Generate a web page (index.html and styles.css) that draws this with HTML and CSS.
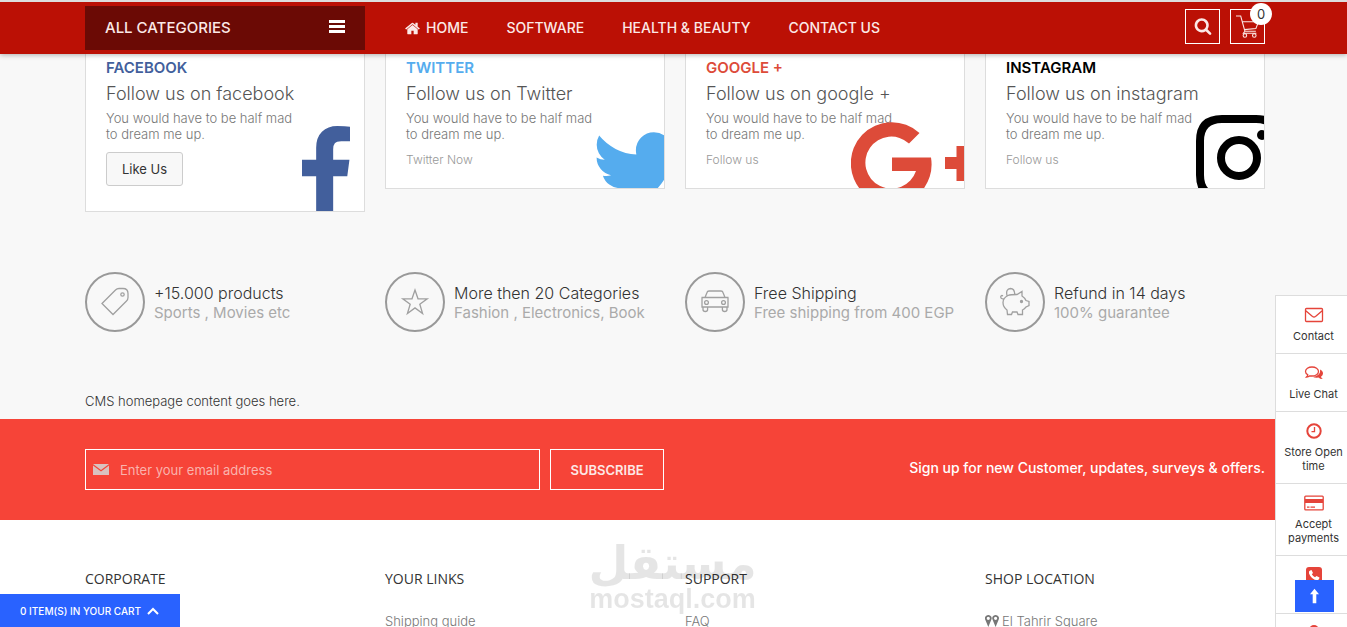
FILE: index.html
```
<!DOCTYPE html>
<html lang="en">
<head>
    <meta charset="UTF-8">
    <meta name="viewport" content="width=device-width, initial-scale=1.0">
    <title>Home page</title>
    <link rel="stylesheet" href="styles.css">
</head>
<body>
    <header class="header">
        <div class="container header-row">
            <button class="categories" type="button">
                <span>ALL CATEGORIES</span>
                <svg class="burger" viewBox="0 0 16 14" aria-hidden="true"><path d="M0 0h16v3H0zM0 5h16v3H0zM0 10h16v3H0z"/></svg>
            </button>
            <nav class="nav">
                <a href="#">
                    <svg class="icon-home" viewBox="64 200 1664 1400" aria-hidden="true"><path d="M1472 992v480q0 26-19 45t-45 19h-384v-384h-256v384h-384q-26 0-45-19t-19-45v-480q0-1 .5-3t.5-3l575-474 575 474q1 2 1 6zm223-69l-62 74q-8 9-21 11h-3q-13 0-21-7l-692-577-692 577q-12 8-24 7-13-2-21-11l-62-74q-8-10-7-23.500t11-21.500l719-599q32-26 76-26t76 26l244 204v-195q0-14 9-23t23-9h192q14 0 23 9t9 23v408l219 182q10 8 11 21.500t-7 23.500z"/></svg>
                    HOME
                </a>
                <a href="#">SOFTWARE</a>
                <a href="#">HEALTH &amp; BEAUTY</a>
                <a href="#">CONTACT US</a>
            </nav>
            <div class="tools">
                <button class="tool" type="button" aria-label="Search">
                    <svg class="icon-search" viewBox="0 0 1792 1792" aria-hidden="true"><path d="M1216 832q0-185-131.500-316.500t-316.500-131.500-316.500 131.500-131.500 316.500 131.500 316.500 316.500 131.500 316.500-131.500 131.500-316.500zm512 832q0 52-38 90t-90 38q-54 0-90-38l-343-342q-179 124-399 124-143 0-273.500-55.500t-225-150-150-225-55.500-273.500 55.500-273.500 150-225 225-150 273.500-55.500 273.500 55.500 225 150 150 225 55.500 273.500q0 220-124 399l343 343q37 37 37 90z"/></svg>
                </button>
                <button class="tool" type="button" aria-label="Cart">
                    <svg class="icon-cart" viewBox="0 0 22 22" aria-hidden="true"><path d="M0 1h4.500l4 14.500h10.500M5.500 6.500h16l-2.500 6.500-11 1M8.500 15.500l-1.500 2h12.500"/><circle cx="8.500" cy="19.500" r="1.700"/><circle cx="17.500" cy="19.500" r="1.700"/></svg>
                    <span class="badge">0</span>
                </button>
            </div>
        </div>
    </header>

    <main>
        <div class="container grid social">
            <section class="card">
                <h2 class="facebook">FACEBOOK</h2>
                <h3>Follow us on facebook</h3>
                <p>You would have to be half mad to dream me up.</p>
                <button class="like" type="button">Like Us</button>
                <svg class="logo logo-facebook" viewBox="479 0 864 1530" aria-hidden="true"><path d="M1343 12v264h-157q-86 0-116 36t-30 108v189h293l-39 296h-254v759h-306v-759h-255v-296h255v-218q0-186 104-288.500t277-102.500q147 0 228 12z"/></svg>
            </section>
            <section class="card">
                <h2 class="twitter">TWITTER</h2>
                <h3>Follow us on Twitter</h3>
                <p>You would have to be half mad to dream me up.</p>
                <a href="#">Twitter Now</a>
                <svg class="logo logo-twitter" viewBox="0 0 1792 1792" aria-hidden="true"><path d="M1684 408q-67 98-162 167 1 14 1 42 0 130-38 259.500t-115.500 248.500-184.500 210.500-258 146-323 54.500q-271 0-496-145 35 4 78 4 225 0 401-138-105-2-188-64.500t-114-159.500q33 5 61 5 43 0 85-11-112-23-185.500-111.500t-73.500-205.500v-4q68 38 146 41-66-44-105-115t-39-154q0-88 44-163 121 149 294.500 238.500t371.500 99.500q-8-38-8-74 0-134 94.500-228.500t228.500-94.500q140 0 236 102 109-21 205-78-37 115-142 178 93-10 186-50z"/></svg>
            </section>
            <section class="card">
                <h2 class="google">GOOGLE +</h2>
                <h3>Follow us on google +</h3>
                <p>You would have to be half mad to dream me up.</p>
                <a href="#">Follow us</a>
                <svg class="logo logo-google" viewBox="0 0 113 66" aria-hidden="true"><path d="M68.500 11A41 41 0 1 0 69 71A41 41 0 0 0 80 35.500H41V49H65A26 26 0 1 1 58 21.500ZM94 35h11.500V24H117V59H105.500V47H94Z"/></svg>
            </section>
            <section class="card">
                <h2 class="instagram">INSTAGRAM</h2>
                <h3>Follow us on instagram</h3>
                <p>You would have to be half mad to dream me up.</p>
                <a href="#">Follow us</a>
                <svg class="logo logo-instagram" viewBox="0 0 68 73" aria-hidden="true"><path d="M26 4H60Q82 4 82 26V60Q82 82 60 82H26Q4 82 4 60V26Q4 4 26 4Z"/><circle cx="43" cy="43" r="18"/><circle class="dot" cx="66" cy="20" r="5"/></svg>
            </section>
        </div>

        <div class="container grid services">
            <div class="service">
                <span class="ring"><svg viewBox="0 0 30 30" aria-hidden="true"><path d="M2 16.500L15.500 3Q17 1.500 19 1.500h4q5 0 5 5v4q0 2-1.500 3.500L13 27.500Z"/><circle cx="22.500" cy="7.500" r="1.700"/></svg></span>
                <p><strong>+15.000 products</strong><span>Sports , Movies etc</span></p>
            </div>
            <div class="service">
                <span class="ring"><svg viewBox="0 0 30 30" aria-hidden="true"><path d="M15 3l3 8.800h9.200l-7.400 5.500 2.800 9.200-7.600-5.600-7.600 5.600 2.800-9.200L2.800 11.800H12Z"/></svg></span>
                <p><strong>More then 20 Categories</strong><span>Fashion , Electronics, Book</span></p>
            </div>
            <div class="service">
                <span class="ring"><svg viewBox="0 0 30 30" aria-hidden="true"><path d="M5 10.500l2-5q.4-1.500 2-1.500h12q1.600 0 2 1.500l2 5M1.500 10.500h27M2 10.500v9.500h26v-9.500M3 20v2.500q0 2 2.300 2t2.300-2V20M22.400 20v2.500q0 2 2.300 2t2.300-2V20"/><circle cx="6.500" cy="15.500" r="1.900"/><circle cx="23.500" cy="15.500" r="1.900"/></svg></span>
                <p><strong>Free Shipping</strong><span>Free shipping from 400 EGP</span></p>
            </div>
            <div class="service">
                <span class="ring"><svg viewBox="0 0 30 30" aria-hidden="true"><path d="M8 8.500Q10.500 7.500 17 7.500L22 4.500V9Q25 11 26 13.500L29 14.500V18.500L26 20Q24.500 22 22.500 23V27.500H18L17 25H12.500L11.500 27.500H7.500L7 23Q3 20 3 15.500Q3 11 8 8.500ZM3.500 12Q.5 12 .8 9.500Q1.300 8 3 8.800M7 8.500Q5.500 2 10.500 1.500Q14.500 1.500 14.800 7.300"/><circle class="eye" cx="21.500" cy="14.500" r="1"/></svg></span>
                <p><strong>Refund in 14 days</strong><span>100% guarantee</span></p>
            </div>
        </div>

        <p class="container cms">CMS homepage content goes here.</p>

        <section class="newsletter">
            <div class="container newsletter-row">
                <form class="subscribe">
                    <label class="field" for="email">
                        <svg class="icon-mail" viewBox="0 0 16 11" aria-label="Email"><path d="M0 0h16L8 6ZM0 1.500l8 6 8-6V11H0Z"/></svg>
                        <input type="email" id="email" name="email" placeholder="Enter your email address">
                    </label>
                    <button type="submit">SUBSCRIBE</button>
                </form>
                <p>Sign up for new Customer, updates, surveys &amp; offers.</p>
            </div>
        </section>
    </main>

    <footer class="container grid footer">
        <div>
            <h4>CORPORATE</h4>
        </div>
        <div>
            <h4>YOUR LINKS</h4>
            <a href="#">Shipping guide</a>
        </div>
        <div>
            <h4>SUPPORT</h4>
            <a href="#">FAQ</a>
        </div>
        <div>
            <h4>SHOP LOCATION</h4>
            <p class="address">
                <svg viewBox="0 0 14 12" aria-hidden="true"><path fill-rule="evenodd" d="M3.300 0a3.300 3.300 0 0 1 3 4.800L3.300 12 .3 4.800A3.300 3.300 0 0 1 3.300 0Zm0 1.700a1.600 1.600 0 1 0 0 3.200 1.600 1.600 0 0 0 0-3.200ZM10.600 0a3.300 3.300 0 0 1 3 4.800L10.600 12l-3-7.200A3.300 3.300 0 0 1 10.600 0Zm0 1.700a1.600 1.600 0 1 0 0 3.200 1.600 1.600 0 0 0 0-3.200Z"/></svg>
                El Tahrir Square
            </p>
        </div>
    </footer>

    <div class="watermark">
        <span class="watermark-ar" lang="ar" dir="rtl">مستقل</span>
        <span class="watermark-en">mostaql.com</span>
    </div>

    <aside class="side">
        <a href="#">
            <svg viewBox="0 0 20 16" aria-hidden="true"><path class="line" d="M2.500 1.500h15q1 0 1 1v11q0 1-1 1h-15q-1 0-1-1v-11q0-1 1-1ZM1.500 3.500l7 6q1.500 1 3 0l7-6"/></svg>
            Contact
        </a>
        <a href="#">
            <svg viewBox="0 0 20 16" aria-hidden="true"><path class="line" d="M8 2c3.600 0 6.500 2 6.500 4.500S11.600 11 8 11q-1 0-2-.2Q4.500 12 2.500 12q1-1 1.300-2.200Q1.500 8.500 1.500 6.500C1.500 4 4.400 2 8 2Z"/><path d="M16 4.500c2 1 3 2.300 3 4q0 2-2 3.200.3 1.300 1.800 2.300-2.500.2-4.300-1.500-3.500.5-6-.8c4.500 0 8.500-2.700 7.500-7.200Z"/></svg>
            Live Chat
        </a>
        <a href="#">
            <svg viewBox="0 0 20 16" aria-hidden="true"><circle class="line bold" cx="10" cy="8" r="6.700"/><path class="line" d="M10.500 4v4.700H7.500"/></svg>
            Store Open time
        </a>
        <a href="#">
            <svg viewBox="0 0 20 16" aria-hidden="true"><path class="line" d="M1.700 1.200h16.600q.9 0 .9.900v11.800q0 .9-.9.900H1.700q-.9 0-.9-.9V2.100q0-.9.900-.9Z"/><path d="M1 4h18v4H1zM3 11.500h2.500v1.300H3zM6.500 11.500H11v1.300H6.500z"/></svg>
            Accept payments
        </a>
        <a href="#" aria-label="Phone">
            <svg viewBox="0 0 20 16" aria-hidden="true"><rect x="2" y="0" width="16" height="16" rx="3"/><path class="phone" d="M5 4.500Q6 3 7.500 3L9 6 7.800 7.300Q9 9.500 11 10.300L12.500 9l3 1.500q0 2-2 2.700Q7.500 13 5 6.500Z"/></svg>
        </a>
        <a href="#" aria-label="Location">
            <svg viewBox="0 0 20 16" aria-hidden="true"><circle cx="10" cy="5" r="5"/><path d="M5.500 7L10 16l4.500-9Z"/></svg>
        </a>
    </aside>

    <button class="to-top" type="button" aria-label="Back to top">
        <svg viewBox="0 0 10 16" aria-hidden="true"><path d="M5 0l5 6H7v10H3V6H0Z"/></svg>
    </button>

    <button class="cart-bar" type="button">
        0 ITEM(S) IN YOUR CART
        <svg viewBox="0 0 12 8" aria-hidden="true"><path d="M1 7l5-5 5 5"/></svg>
    </button>
</body>
</html>
```
FILE: styles.css
```
* {
    box-sizing: border-box;
}

body {
    margin: 0;
    height: 100vh;
    overflow: hidden;
    font-family: Inter, "Liberation Sans", sans-serif;
    font-size: 13px;
    font-weight: 300;
    line-height: 20px;
    color: #333;
    background-color: #fff;
}

h2, h3, h4, p {
    margin: 0;
}

a {
    color: inherit;
    text-decoration: none;
}

button {
    padding: 0;
    font-family: inherit;
    cursor: pointer;
}

svg {
    display: block;
    fill: currentColor;
    flex: none;
}

.container {
    padding: 0 82px 0 85px;
}

.grid {
    display: grid;
    grid-template-columns: repeat(4, 1fr);
    gap: 20px;
    align-items: start;
}

/* header */
.header {
    position: relative;
    z-index: 10;
    border-top: 2px solid #ddd;
    background-color: #bb1005;
    box-shadow: 0 1px 5px rgba(0, 0, 0, 0.3);
}

.header-row {
    display: flex;
    align-items: center;
    height: 52px;
    color: #fff;
}

.categories {
    display: flex;
    align-items: center;
    justify-content: space-between;
    width: 280px;
    height: 44px;
    padding: 0 20px 2px;
    border: none;
    background-color: #6b0a05;
    color: #fbe9e7;
    font-size: 15px;
    font-weight: 500;
}

.burger {
    width: 16px;
    height: 14px;
    color: #fff;
}

.nav {
    display: flex;
    gap: 38px;
    margin-left: 40px;
    font-size: 14px;
    font-weight: 500;
    color: #fbe9e7;
}

.nav a {
    display: flex;
    align-items: center;
    gap: 6px;
}

.icon-home {
    width: 15px;
    height: 13px;
}

.tools {
    display: flex;
    gap: 10px;
    margin-left: auto;
    padding-bottom: 4px;
}

.tool {
    position: relative;
    display: flex;
    align-items: center;
    justify-content: center;
    width: 35px;
    height: 35px;
    border: 1px solid #fff;
    background: none;
    color: #fbe9e7;
}

.icon-search {
    width: 18px;
    height: 18px;
}

.icon-cart {
    width: 23px;
    height: 23px;
    fill: none;
    stroke: currentColor;
}

.badge {
    position: absolute;
    top: -7px;
    right: -8px;
    width: 22px;
    height: 22px;
    border-radius: 50%;
    background-color: #fff;
    color: #333;
    font-size: 13px;
    line-height: 23px;
}

/* social cards */
main {
    background-color: #f8f8f8;
}

.card {
    position: relative;
    overflow: hidden;
    padding: 4px 60px 20px 20px;
    border: 1px solid #ddd;
    border-top: none;
    background-color: #fff;
    line-height: 16px;
    color: #777;
}

.card h2 {
    font-size: 15px;
    font-weight: 600;
    line-height: 20px;
}

.card h3 {
    font-size: 18px;
    font-weight: 300;
    line-height: 32px;
    color: #555;
    white-space: nowrap;
}

.card p {
    margin-bottom: 10px;
}

.card a {
    display: block;
    font-size: 12px;
    color: #999;
}

.card .facebook, .logo-facebook {
    color: #425f9c;
}

.card .twitter, .logo-twitter {
    color: #55acee;
}

.card .google, .logo-google {
    color: #dd4b39;
}

.card .instagram, .logo-instagram {
    color: #000;
}

.like {
    display: block;
    width: 77px;
    height: 34px;
    margin-bottom: 5px;
    border: 1px solid #ccc;
    border-radius: 3px;
    background-color: #f8f8f8;
    color: #333;
    font-size: 13px;
}

.logo {
    position: absolute;
    right: 0;
    bottom: 0;
}

.logo-facebook {
    right: 14px;
    width: 48px;
    height: 85px;
}

.logo-twitter {
    right: -23px;
    bottom: -30px;
    width: 100px;
    height: 100px;
}

.logo-google {
    width: 113px;
    height: 66px;
}

.logo-instagram {
    width: 68px;
    height: 73px;
    fill: none;
    stroke: currentColor;
    stroke-width: 8;
}

.dot {
    fill: currentColor;
    stroke: none;
}

/* services */
.services {
    margin-top: 60px;
}

.service {
    display: flex;
    align-items: center;
    gap: 9px;
}

.ring {
    display: flex;
    align-items: center;
    justify-content: center;
    flex: none;
    width: 60px;
    height: 60px;
    border: 2px solid #999;
    border-radius: 50%;
    color: #a0a0a0;
}

.ring svg {
    width: 30px;
    height: 30px;
    fill: none;
    stroke: currentColor;
    stroke-width: 1.3;
}

.ring .eye {
    fill: currentColor;
}

.service p {
    padding-top: 2px;
    white-space: nowrap;
}

.service strong {
    display: block;
    font-size: 16px;
    font-weight: 300;
}

.service p span {
    display: block;
    color: #aaa;
    font-size: 15px;
    font-weight: 400;
}

.cms {
    padding-top: 59px;
    padding-bottom: 8px;
}

/* newsletter */
.newsletter {
    padding: 30px 0;
    background-color: #f64438;
    color: #fff;
}

.newsletter-row {
    display: flex;
    align-items: center;
    justify-content: space-between;
}

.newsletter-row p {
    padding-bottom: 3px;
    font-size: 14px;
    font-weight: 500;
}

.subscribe {
    display: flex;
    gap: 10px;
    width: 579px;
}

.field {
    display: flex;
    align-items: center;
    flex: 1;
    gap: 11px;
    height: 41px;
    padding-left: 7px;
    border: 1px solid #fff;
    color: #d9c2c0;
}

.icon-mail {
    width: 16px;
    height: 11px;
}

.field input {
    flex: 1;
    height: 39px;
    padding: 0;
    border: none;
    outline: none;
    background: none;
    color: #fff;
    font: inherit;
}

.field input::placeholder {
    color: #fab3ad;
    font-weight: 400;
}

.subscribe button {
    width: 114px;
    border: 1px solid #fff;
    background: none;
    color: #fde8e6;
    font-size: 13px;
    font-weight: 600;
}

/* footer */
.footer {
    padding-top: 49px;
    color: #777;
}

.footer h4 {
    margin-bottom: 22px;
    font-family: "Open Sans", sans-serif;
    font-size: 14px;
    font-weight: 400;
    color: #333;
}

.footer a, .address {
    white-space: nowrap;
}

.address {
    display: flex;
    align-items: center;
    gap: 3px;
}

.address svg {
    width: 14px;
    height: 12px;
}

.watermark {
    position: fixed;
    left: 50%;
    bottom: 14px;
    display: flex;
    flex-direction: column;
    align-items: center;
    width: 162px;
    margin-left: -82px;
    color: rgba(0, 0, 0, 0.1);
    font-weight: 700;
    pointer-events: none;
}

.watermark-ar {
    font-family: "DejaVu Sans", sans-serif;
    font-size: 46px;
    line-height: 44px;
}

.watermark-en {
    font-family: "Liberation Sans", sans-serif;
    font-size: 27px;
    line-height: 28px;
}

/* right side links */
.side {
    position: fixed;
    top: 295px;
    right: 0;
    width: 72px;
    height: 400px;
    border-left: 1px solid #ddd;
    background-color: #fff;
    font-size: 11px;
    font-weight: 400;
    line-height: 14px;
    text-align: center;
}

.side a {
    display: block;
    min-height: 58px;
    padding: 11px 0 10px 4px;
    border-top: 1px solid #ddd;
}

.side svg {
    width: 20px;
    height: 16px;
    margin: 0 auto 6px;
    color: #e5443a;
}

.side .line {
    fill: none;
    stroke: currentColor;
    stroke-width: 1.3;
}

.side .bold {
    stroke-width: 2;
}

.side .phone {
    fill: #fff;
}

.to-top {
    position: fixed;
    right: 13px;
    bottom: 15px;
    display: flex;
    align-items: center;
    justify-content: center;
    width: 39px;
    height: 32px;
    border: none;
    background-color: #2962ff;
    color: #fff;
}

.to-top svg {
    width: 9px;
    height: 16px;
}

.cart-bar {
    position: fixed;
    left: 0;
    bottom: 0;
    display: flex;
    align-items: center;
    gap: 6px;
    width: 180px;
    height: 33px;
    padding-left: 20px;
    border: none;
    background-color: #2962ff;
    color: #fff;
    font-size: 10px;
    font-weight: 500;
    white-space: nowrap;
}

.cart-bar svg {
    width: 12px;
    height: 8px;
    fill: none;
    stroke: currentColor;
    stroke-width: 2;
}
```
